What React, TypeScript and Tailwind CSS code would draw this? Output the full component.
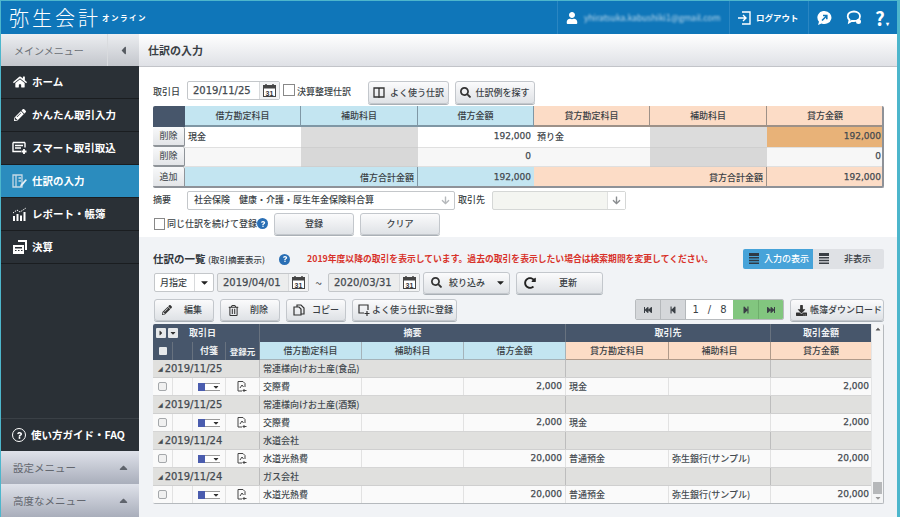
import type { ReactNode } from 'react'
import { FaHome, FaPencilAlt, FaUser, FaSearch, FaArrowDown, FaQuestion, FaCaretDown, FaCaretUp, FaCaretLeft, FaCaretRight, FaRegTrashAlt, FaRedoAlt, FaDownload, FaStepBackward, FaStepForward, FaFastBackward, FaFastForward } from 'react-icons/fa'

const FONT = 'font-["Noto_Sans_CJK_JP","Liberation_Sans",sans-serif]'

const menu = [
  { label: 'ホーム', icon: <FaHome size={14} /> },
  { label: 'かんたん取引入力', icon: <FaPencilAlt size={12} /> },
  { label: 'スマート取引取込', icon: <SmartIcon /> },
  { label: '仕訳の入力', icon: <BookIcon />, active: true },
  { label: 'レポート・帳簿', icon: <ChartIcon /> },
  { label: '決算', icon: <CalcIcon /> },
]

const entries = [
  { date: '2019/11/25', memo: '常連様向けお土産(食品)', debit: '交際費', amount: '2,000', credit: '現金', sub: '' },
  { date: '2019/11/25', memo: '常連様向けお土産(酒類)', debit: '交際費', amount: '2,000', credit: '現金', sub: '' },
  { date: '2019/11/24', memo: '水道会社', debit: '水道光熱費', amount: '20,000', credit: '普通預金', sub: '弥生銀行(サンプル)' },
  { date: '2019/11/24', memo: 'ガス会社', debit: '水道光熱費', amount: '20,000', credit: '普通預金', sub: '弥生銀行(サンプル)' },
]

function SmartIcon() {
  return (
    <svg width="16" height="14" viewBox="0 0 16 14" fill="none" stroke="currentColor" strokeWidth="1.4">
      <path d="M1 1.500h12M1 1.500v9h8M13 1.500v5M3 4.500h8M3 7h6" />
      <path d="M12 8v5M9.500 10.500h5" strokeWidth="1.800" />
    </svg>
  )
}

function BookIcon() {
  return (
    <svg width="16" height="15" viewBox="0 0 16 15" fill="none" stroke="#c5d9e6" strokeWidth="1.300">
      <path d="M1 1h9v12H1zM4 1v12M6.500 4H9M6.500 7H9" />
      <path d="M15 6l-5 6-2 1 .5-2.200 5-5.600z" fill="#e8f0f5" stroke="none" />
    </svg>
  )
}

function ChartIcon() {
  return (
    <svg width="16" height="14" viewBox="0 0 16 14" fill="currentColor">
      <path d="M1 9h2v5H1zM4.500 7h2v7h-2zM8 8.500h2V14H8zM11.500 5h2v9h-2z" />
      <path d="M1 6l4-3 3 2 6-4" fill="none" stroke="currentColor" strokeWidth="1" strokeDasharray="1.500 1" />
    </svg>
  )
}

function CalcIcon() {
  return (
    <svg width="16" height="14" viewBox="0 0 16 14" fill="currentColor">
      <path d="M6 0h9v10h-2V2H6z" />
      <path d="M1 5h11v9H1zM3 7v1.500h7V7zM3 10v1h1.500v-1zM6 10v1h1.500v-1zM9 10v1h1.500v-1z" fillRule="evenodd" />
    </svg>
  )
}

function CalendarIcon() {
  return (
    <svg width="13" height="13" viewBox="0 0 13 13">
      <rect x="0.500" y="1.500" width="12" height="11" fill="#fff" stroke="#444" />
      <rect x="0.500" y="1.500" width="12" height="3" fill="#444" />
      <path d="M3 0v3M10 0v3" stroke="#444" strokeWidth="1.500" />
      <text x="6.500" y="11.500" fontSize="7" textAnchor="middle" fill="#333" fontWeight="700" fontFamily="Liberation Sans">31</text>
    </svg>
  )
}

function HelpBadge() {
  return (
    <span className="flex h-[11px] w-[11px] shrink-0 items-center justify-center rounded-full bg-[#2a6fb5] text-white">
      <FaQuestion size={6} />
    </span>
  )
}

function Btn({ className, children }: { className: string; children: ReactNode }) {
  return (
    <div className={`flex items-center rounded-[3px] border border-[#c3c7cc] bg-gradient-to-b from-[#fbfbfc] to-[#dfe2e6] text-[9px] font-medium text-[#3a3f45] shadow-[0_1px_0_#aab0b6] ${className}`}>
      {children}
    </div>
  )
}

function DateBox({ value, className }: { value: string; className: string }) {
  return (
    <div className={`flex items-center rounded-[2px] border border-[#c4c7ca] font-["DejaVu_Sans",sans-serif] text-[10px] text-[#444a50] [-webkit-text-stroke:0.25px] ${className}`}>
      <span className="flex-1 pl-[5px]">{value}</span>
      <span className="flex w-[20px] items-center justify-center self-stretch border-l border-[#d8dadc] bg-[#f2f3f4]"><CalendarIcon /></span>
    </div>
  )
}

function Sidebar() {
  return (
    <aside className="flex w-[138px] shrink-0 flex-col bg-[#2a3036]">
      <div className="flex h-[32px] items-center bg-gradient-to-b from-[#eceef1] to-[#c3c6cc] text-[10px] text-[#6b7076]">
        <span className="flex-1 pl-[13px]">メインメニュー</span>
        <span className="flex h-full w-[32px] items-center justify-center border-l border-[#d9dbde] text-[#555a60]"><FaCaretLeft size={13} /></span>
      </div>
      {menu.map(m => (
        <div key={m.label} className={`flex h-[33px] items-center gap-[4px] border-b border-[#1a1d20] pl-[11px] text-[10.500px] font-bold text-white ${m.active ? 'bg-[#2b8cbe]' : ''}`}>
          <span className="flex w-[16px] justify-center">{m.icon}</span>
          {m.label}
        </div>
      ))}
      <div className="flex-1" />
      <div className="flex h-[33px] items-center gap-[5px] border-t border-[#3a4046] pl-[11px] text-[10.500px] font-bold text-white">
        <span className="flex h-[14px] w-[14px] items-center justify-center rounded-full border-[1.500px] border-white"><FaQuestion size={7} /></span>
        使い方ガイド・FAQ
      </div>
      <Collapsed label="設定メニュー" />
      <Collapsed label="高度なメニュー" />
    </aside>
  )
}

function Collapsed({ label }: { label: string }) {
  return (
    <div className="flex h-[33px] items-center justify-between bg-gradient-to-b from-[#dfe2ea] to-[#a9aebb] pl-[12px] pr-[9px] text-[10.500px] text-[#63676f]">
      {label}
      <FaCaretUp size={13} className="text-[#5f646c]" />
    </div>
  )
}

function EntryForm() {
  return (
    <section className="h-[170px] bg-white pl-[14px] pr-[13px] pt-[14px] text-[9px] text-[#3a3f45]">
      <div className="flex h-[25px] items-start">
        <span className="mt-[4px] w-[34px] font-medium">取引日</span>
        <DateBox value="2019/11/25" className="h-[19px] w-[93px] bg-white" />
        <span className="ml-[3px] mt-[3px] h-[12px] w-[12px] border border-[#888] bg-white" />
        <span className="ml-[2px] mt-[4px] w-[54px] font-medium">決算整理仕訳</span>
        <Btn className="ml-[17px] h-[23px] w-[81px] justify-center gap-[5px]">
          <svg width="12" height="11" viewBox="0 0 12 11" fill="none" stroke="#333" strokeWidth="1.300"><path d="M1 1h4.500l.5 1 .5-1H11v9H6.500L6 10.500 5.500 10H1zM6 2v8" /></svg>
          よく使う仕訳
        </Btn>
        <Btn className="ml-[6px] h-[23px] w-[80px] justify-center gap-[4px]"><FaSearch size={11} className="text-[#333]" />仕訳例を探す</Btn>
      </div>
      <InputTable />
      <div className="mt-[2px] flex h-[20px] items-center">
        <span className="w-[34px] font-medium">摘要</span>
        <div className="flex h-[19px] w-[268px] items-center rounded-[2px] border border-[#c4c7ca] pl-[6px] font-medium">
          <span className="flex-1">社会保険　健康・介護・厚生年金保険料合算</span>
          <span className="flex w-[18px] justify-center text-[#b5b8bb]"><FaArrowDown size={9} /></span>
        </div>
        <span className="ml-[3px] w-[34px] font-medium">取引先</span>
        <div className="flex h-[19px] w-[134px] items-center justify-end rounded-[2px] border border-[#d5d7d6] bg-[#f4f5f1] text-[#8a8d90]">
          <span className="flex h-full w-[18px] items-center justify-center border-l border-[#e0e1e0] bg-white"><FaArrowDown size={9} /></span>
        </div>
      </div>
      <div className="mt-[2px] flex h-[23px] items-center">
        <span className="ml-px h-[12px] w-[11px] border border-[#888] bg-white" />
        <span className="ml-[2px] w-[90px] whitespace-nowrap font-medium">同じ仕訳を続けて登録</span>
        <HelpBadge />
        <Btn className="ml-[6px] h-[22px] w-[80px] justify-center">登録</Btn>
        <Btn className="ml-[6px] h-[22px] w-[80px] justify-center">クリア</Btn>
      </div>
    </section>
  )
}

function RowBtn({ label }: { label: string }) {
  return (
    <div className="flex items-center justify-center rounded-[2px] border-b-2 border-r border-[#8f9499] bg-gradient-to-b from-[#f8f9fa] to-[#e3e5e8] text-[9px] font-medium text-[#555a60]">{label}</div>
  )
}

function InputTable() {
  const blue = 'bg-[#c3e5f1]'
  const peach = 'bg-[#fcdcc6]'
  const cell = 'flex items-center px-[3px] text-[9px] font-medium'
  const num = 'justify-end font-["DejaVu_Sans",sans-serif] font-normal text-[#444a50] [-webkit-text-stroke:0.25px]'
  return (
    <div className="grid h-[82px] w-[731px] grid-cols-[32px_116px_117px_116px_116px_117px_117px] grid-rows-[21px_20px_20px_21px] overflow-hidden rounded-[2px] border-b-2 border-r-2 border-[#8e9298]">
      <div className="bg-[#47566b]" />
      {['借方勘定科目', '補助科目', '借方金額'].map(h => (
        <div key={h} className={`${cell} ${blue} justify-center border-b-2 border-r border-[#7f97a5]`}>{h}</div>
      ))}
      {['貸方勘定科目', '補助科目', '貸方金額'].map(h => (
        <div key={h} className={`${cell} ${peach} justify-center border-b-2 border-r border-[#9d9188]`}>{h}</div>
      ))}
      <RowBtn label="削除" />
      <div className={`${cell} bg-white`}>現金</div>
      <div className="bg-[#dcdcdc]" />
      <div className={`${cell} ${num} bg-white`}>192,000</div>
      <div className={`${cell} bg-white`}>預り金</div>
      <div className="bg-[#dcdcdc]" />
      <div className={`${cell} ${num} bg-[#e8b278]`}>192,000</div>
      <RowBtn label="削除" />
      <div className="border-y border-[#e0e0e0] bg-[#f7f7f7]" />
      <div className="border-y border-[#cfcfcf] bg-[#d8d8d8]" />
      <div className={`${cell} ${num} border-y border-[#e0e0e0] bg-[#f7f7f7]`}>0</div>
      <div className="border-y border-[#e0e0e0] bg-[#f7f7f7]" />
      <div className="border-y border-[#cfcfcf] bg-[#d8d8d8]" />
      <div className={`${cell} ${num} border-y border-[#e0e0e0] bg-[#f7f7f7]`}>0</div>
      <RowBtn label="追加" />
      <div className={`${cell} ${blue} col-span-2 justify-end border-r border-[#7f97a5]`}>借方合計金額</div>
      <div className={`${cell} ${num} ${blue}`}>192,000</div>
      <div className={`${cell} ${peach} col-span-2 justify-end border-r border-[#9d9188]`}>貸方合計金額</div>
      <div className={`${cell} ${num} ${peach}`}>192,000</div>
    </div>
  )
}

function ListPanel() {
  return (
    <section className="min-h-0 flex-1 bg-[#f1f3f6] pl-[14px] pr-[13px] pt-[12px] text-[9px] text-[#3a3f45]">
      <div className="flex h-[20px] items-center">
        <span className="w-[52px] whitespace-nowrap text-[10.500px] font-bold text-[#33383e]">仕訳の一覧</span>
        <span className="ml-[3px] w-[70px] whitespace-nowrap text-[8.500px] font-medium">(取引摘要表示)</span>
        <span className="ml-[1px]"><HelpBadge /></span>
        <span className="ml-[17px] whitespace-nowrap text-[8.800px] font-bold text-[#d8322a]">2019年度以降の取引を表示しています。過去の取引を表示したい場合は検索期間を変更してください。</span>
        <div className="ml-auto flex h-[20px] w-[141px] shrink-0 overflow-hidden rounded-[2px] font-medium">
          <span className="flex w-[70px] items-center gap-[4px] whitespace-nowrap bg-[#47a3d9] pl-[5px] text-white"><ListIcon color="#2f3a45" />入力の表示</span>
          <span className="flex flex-1 items-center whitespace-nowrap bg-[#dfe1e5] pl-[5px]"><ListIcon color="#3a3f45" /><span className="ml-[14px]">非表示</span></span>
        </div>
      </div>
      <div className="mt-[2px] flex h-[23px] items-center pl-px">
        <div className="flex h-[19px] w-[60px] items-center rounded-[2px] border border-[#c4c7ca] bg-white font-medium">
          <span className="flex-1 pl-[5px]">月指定</span>
          <span className="flex h-full w-[19px] items-center justify-center border-l border-[#d8dadc]"><FaCaretDown size={11} className="text-[#222]" /></span>
        </div>
        <DateBox value="2019/04/01" className="ml-[3px] h-[19px] w-[92px] bg-[#eceded]" />
        <span className="w-[19px] text-center text-[12px]">~</span>
        <DateBox value="2020/03/31" className="h-[19px] w-[92px] bg-[#eceded]" />
        <Btn className="ml-[3px] h-[22px] w-[87px] pl-[7px]"><FaSearch size={11} className="text-[#333]" /><span className="ml-[7px] whitespace-nowrap">絞り込み</span><FaCaretDown size={11} className="ml-[10px] text-[#222]" /></Btn>
        <Btn className="ml-[6px] h-[22px] w-[87px] pl-[7px]"><FaRedoAlt size={12} className="text-[#222]" /><span className="ml-[23px]">更新</span></Btn>
      </div>
      <div className="mt-[5px] flex h-[25px] items-start pl-px">
        <Btn className="h-[22px] w-[60px] pl-[7px]"><FaPencilAlt size={10} className="text-[#333]" /><span className="ml-[12px]">編集</span></Btn>
        <Btn className="ml-[6px] h-[22px] w-[60px] pl-[7px]"><FaRegTrashAlt size={11} className="text-[#333]" /><span className="ml-[11px]">削除</span></Btn>
        <Btn className="ml-[6px] h-[22px] w-[60px] pl-[6px]">
          <svg width="12" height="12" viewBox="0 0 12 12" fill="none" stroke="#333" strokeWidth="1.200"><path d="M4 3V1h4l3 3v6H8M1 3h5l2 2v6H1z" /></svg>
          <span className="ml-[7px]">コピー</span>
        </Btn>
        <Btn className="ml-[6px] h-[22px] w-[105px] pl-[5px]">
          <svg width="12" height="12" viewBox="0 0 12 12" fill="none" stroke="#333" strokeWidth="1.200"><path d="M6 9H1V1h9v5M9 7v5M6.500 9.500h5" /></svg>
          <span className="ml-[2px] whitespace-nowrap">よく使う仕訳に登録</span>
        </Btn>
        <Pager />
        <Btn className="ml-[6px] h-[22px] w-[94px] pl-[5px]"><FaDownload size={11} className="text-[#333]" /><span className="ml-[3px] whitespace-nowrap">帳簿ダウンロード</span></Btn>
      </div>
      <ListTable />
    </section>
  )
}

function ListIcon({ color }: { color: string }) {
  return (
    <svg width="12" height="12" viewBox="0 0 12 12" fill={color} className="shrink-0">
      <path d="M1 0h10v3H1zM1 4h10v1.500H1zM1 6.800h10v1.500H1zM1 9.600h10V11H1z" />
    </svg>
  )
}

function Pager() {
  const cell = 'flex w-[25px] items-center justify-center border-r border-[#b5b8bb]'
  return (
    <div className="ml-auto flex h-[21px] w-[149px] overflow-hidden rounded-[2px] border border-[#b8bbbe] text-[#3a3f45]">
      <span className={`${cell} bg-[#d5d7da]`}><FaFastBackward size={8} /></span>
      <span className={`${cell} bg-[#d5d7da]`}><FaStepBackward size={8} /></span>
      <span className='flex flex-1 items-center justify-center gap-[9px] bg-white font-["DejaVu_Sans",sans-serif] text-[10px]'><span>1</span><span>/</span><span>8</span></span>
      <span className="flex w-[25px] items-center justify-center bg-[#82c67f]"><FaStepForward size={8} /></span>
      <span className="flex w-[25px] items-center justify-center border-l border-[#6fae6c] bg-[#82c67f]"><FaFastForward size={8} /></span>
    </div>
  )
}

function ListTable() {
  const cols = 'grid grid-cols-[20px_20px_33px_34px_102px_102px_102px_103px_102px_101px]'
  const head = 'flex items-center justify-center border-r border-[#68727f] bg-[#47566b] font-bold text-[#f0f2f4]'
  const sub = 'flex items-center justify-center border-r border-b border-[#a5b3ba] font-medium'
  const td = 'flex items-center border-r border-[#e2e2e2] px-[3px] font-medium'
  const num = 'justify-end font-["DejaVu_Sans",sans-serif] font-normal text-[#444a50] [-webkit-text-stroke:0.25px]'
  return (
    <div className="relative h-[180px] w-[731px] overflow-hidden rounded-[2px] border-b border-r border-[#b5b9bd] bg-[#fbfbfb] text-[9px]">
      <div className={`${cols} h-[18px] w-[719px]`}>
        <div className={`${head} col-span-4 justify-start gap-[2px] pl-[3px]`}>
          <span className="flex h-[10px] w-[10px] items-center justify-center rounded-[1px] bg-[#e6e8ea] text-[#333]"><FaCaretRight size={8} /></span>
          <span className="flex h-[10px] w-[10px] items-center justify-center rounded-[1px] bg-[#e6e8ea] text-[#333]"><FaCaretDown size={8} /></span>
          <span className="ml-[9px]">取引日</span>
        </div>
        <div className={`${head} col-span-3`}>摘要</div>
        <div className={`${head} col-span-2`}>取引先</div>
        <div className={head}>取引金額</div>
      </div>
      <div className={`${cols} h-[18px] w-[719px]`}>
        <div className={head}><span className="h-[8px] w-[8px] rounded-[1px] bg-[#e6e8ea]" /></div>
        <div className={head} />
        <div className={head}>付箋</div>
        <div className={`${head} whitespace-nowrap text-[8.500px]`}>登録元</div>
        {['借方勘定科目', '補助科目', '借方金額'].map(h => (
          <div key={h} className={`${sub} bg-[#c3e5f1]`}>{h}</div>
        ))}
        {['貸方勘定科目', '補助科目', '貸方金額'].map(h => (
          <div key={h} className={`${sub} border-[#b09a8a] bg-[#fcdcc6]`}>{h}</div>
        ))}
      </div>
      {entries.map((e, i) => (
        <div key={i}>
          <div className={`${cols} h-[18px] w-[719px] border-b border-[#cfcfcf] bg-[#e0e0de] text-[#444a50]`}>
            <div className='col-span-4 flex items-center border-r border-[#bdbdbd] pl-[5px] font-["DejaVu_Sans",sans-serif] text-[10px] [-webkit-text-stroke:0.25px]'>
              <span className="mr-[2px] text-[6px]">◢</span>{e.date}
            </div>
            <div className="col-span-3 flex items-center border-r border-[#bdbdbd] pl-[3px] font-medium">{e.memo}</div>
            <div className="col-span-2 border-r border-[#bdbdbd]" />
            <div />
          </div>
          <div className={`${cols} h-[18px] w-[719px] border-b border-[#d5d5d5] bg-[#fafafa] text-[#444a50]`}>
            <div className={`${td} justify-center`}><span className="h-[9px] w-[9px] rounded-[2px] border border-[#a5a8ab] bg-[#f0f0f0]" /></div>
            <div className={td} />
            <div className={`${td} justify-center`}>
              <span className="h-[8px] w-[7px] shrink-0 bg-[#4a5cae]" />
              <span className="flex h-[8px] w-[15px] shrink-0 items-center justify-end border-y border-[#999] bg-white text-[#333]"><FaCaretDown size={8} /></span>
            </div>
            <div className={`${td} justify-center`}>
              <svg width="11" height="11" viewBox="0 0 11 11" fill="none" stroke="#444" strokeWidth="1"><path d="M1 .500h5l2 2V6M1 .500V10h4" /><path d="M3 7l2-3 1.500 2M7 8v3M5.500 9.500h4" /></svg>
            </div>
            <div className={td}>{e.debit}</div>
            <div className={td} />
            <div className={`${td} ${num}`}>{e.amount}</div>
            <div className={td}>{e.credit}</div>
            <div className={`${td} whitespace-nowrap`}>{e.sub}</div>
            <div className={`${td} ${num} border-r-0`}>{e.amount}</div>
          </div>
        </div>
      ))}
      <div className="absolute bottom-0 right-0 top-0 flex w-[12px] flex-col items-center justify-between border-l border-[#e4e5e6] bg-[#f4f5f6] py-[1px] text-[#555]">
        <FaCaretUp size={8} />
        <div className="mt-auto h-[12px] w-[9px] bg-[#b6b8ba]" />
        <FaCaretDown size={8} className="text-[#999]" />
      </div>
    </div>
  )
}

export default function App() {
  return (
    <div className={`flex h-[517px] w-[900px] flex-col overflow-hidden border-l border-r-[3px] border-t border-[#4db6cc] ${FONT}`}>
      <header className="flex h-[33px] shrink-0 items-center bg-[#0f76b9] text-white">
        <span className="ml-[8px] text-[20px] font-light leading-none tracking-[3px]">弥生会計</span>
        <span className="ml-[1px] text-[7.500px] font-bold tracking-[1.500px]">オンライン</span>
        <div className="ml-auto flex h-full items-center">
          <div className="flex h-full w-[172px] items-center border-l border-[#2a86c2] pl-[8px]">
            <FaUser size={12} />
            <span className="ml-[6px] w-[136px] overflow-hidden whitespace-nowrap text-[8.500px] opacity-70 blur-[1px]">yhiratsuka.kabushiki1@gmail.com</span>
          </div>
          <div className="flex h-full w-[79px] items-center gap-[5px] border-l border-[#2a86c2] pl-[7px] text-[8.500px] font-bold">
            <svg width="14" height="14" viewBox="0 0 14 14" fill="none" stroke="#fff" strokeWidth="1.400"><path d="M5 1h8v12H5M1 7h8M6 4l3 3-3 3" /></svg>
            ログアウト
          </div>
          <div className="flex h-full w-[89px] items-center gap-[14px] border-l border-[#2a86c2] pl-[8px]">
            <svg width="15" height="14" viewBox="0 0 15 14"><path d="M7.500 0a7 6.500 0 1 1-3 12.400L1 14l1-3.300A6.500 6.500 0 0 1 7.500 0z" fill="#fff" /><path d="M5 9.500l4.500-4.500M6 4.500h3.800v3.800" fill="none" stroke="#0f76b9" strokeWidth="1.600" /></svg>
            <svg width="16" height="15" viewBox="0 0 16 15" fill="none" stroke="#fff" strokeWidth="1.800"><path d="M8 1.500c3.500 0 6 2 6 4.700 0 2.800-2.500 4.800-6 4.800-.7 0-1.500 0-2-.2L3 12.500l.5-2.800C2.300 8.800 1.700 7.600 1.700 6.200 1.700 3.500 4.500 1.500 8 1.500z" /><circle cx="12.500" cy="11.500" r="2.500" fill="#fff" stroke="none" /></svg>
            <span className="relative -ml-[1px] text-[19px] font-bold leading-none">?<span className="absolute -right-[4px] bottom-0 text-[6px]">▾</span></span>
          </div>
        </div>
      </header>
      <div className="flex min-h-0 flex-1">
        <Sidebar />
        <main className="flex min-w-0 flex-1 flex-col">
          <div className="flex h-[33px] shrink-0 items-center border-b border-[#c2c4c9] bg-gradient-to-b from-white to-[#dfe1e6] pl-[9px] text-[11px] font-bold text-[#3a3f45]">仕訳の入力</div>
          <EntryForm />
          <ListPanel />
        </main>
      </div>
    </div>
  )
}
